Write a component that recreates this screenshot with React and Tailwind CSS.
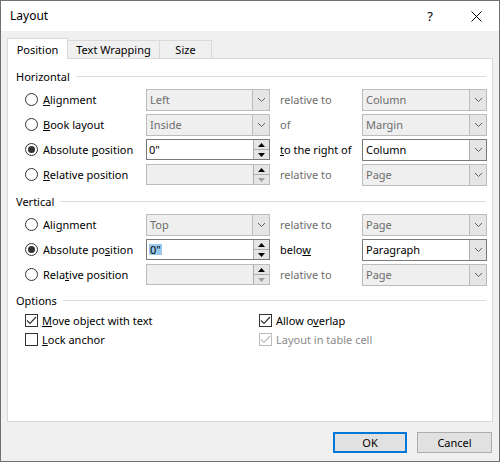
import React from "react";

const font = { fontFamily: '"Noto Sans", "Open Sans", sans-serif' };

function Chevron() {
  return (
    <svg width="9" height="6" viewBox="0 0 9 6">
      <path d="M1 1 L4.5 4.5 L8 1" fill="none" stroke="#606060" strokeWidth="1" />
    </svg>
  );
}

function Select({ value, disabled }) {
  return (
    <div
      className={
        "flex h-[22px] w-full items-stretch border " +
        (disabled ? "border-[#bcbcbc] bg-[#efefef] text-[#6d6d6d]" : "border-[#7a7a7a] bg-white text-black")
      }
    >
      <div className="flex flex-1 items-center pl-[3px]">{value}</div>
      <div
        className={
          "flex w-[17px] items-center justify-center border-l bg-[#e5e5e5] " +
          (disabled ? "border-[#bcbcbc]" : "border-[#adadad]")
        }
      >
        <Chevron />
      </div>
    </div>
  );
}

function Spinner({ value, disabled, selected }) {
  return (
    <div
      className={
        "flex h-[21px] w-full items-stretch border " +
        (disabled ? "border-[#bcbcbc] bg-[#efefef]" : "border-[#7a7a7a] bg-white")
      }
    >
      <div className="flex flex-1 items-center pl-[2px]">
        {value && (
          <span className={selected ? "bg-[#99c9ef] px-px text-black" : "text-black"}>{value}</span>
        )}
      </div>
      <div className="flex w-[16px] flex-col border-l border-[#adadad] bg-[#e5e5e5]">
        <div className="flex flex-1 items-center justify-center border-b border-[#adadad]">
          <svg width="7" height="4" viewBox="0 0 7 4">
            <path d="M0 4 L3.5 0 L7 4 Z" fill="#000" />
          </svg>
        </div>
        <div className="flex flex-1 items-center justify-center">
          <svg width="7" height="4" viewBox="0 0 7 4">
            <path d="M0 0 L3.5 4 L7 0 Z" fill={disabled ? "#a0a0a0" : "#000"} />
          </svg>
        </div>
      </div>
    </div>
  );
}

function Radio({ checked, children }) {
  return (
    <div className="flex items-center gap-[5px]">
      <div className="flex h-[13px] w-[13px] items-center justify-center rounded-full border border-[#333] bg-white">
        {checked && <div className="h-[7px] w-[7px] rounded-full bg-[#333]" />}
      </div>
      <span className="text-black">{children}</span>
    </div>
  );
}

function Check({ checked, disabled, children }) {
  return (
    <div className="flex items-center gap-[4px]">
      <div
        className={
          "flex h-[13px] w-[13px] items-center justify-center border bg-white " +
          (disabled ? "border-[#bcbcbc]" : "border-[#333]")
        }
      >
        {checked && (
          <svg width="11" height="9" viewBox="0 0 11 9">
            <path d="M1 4.5 L4 7.5 L10 1" fill="none" stroke={disabled ? "#bcbcbc" : "#333"} strokeWidth="1.2" />
          </svg>
        )}
      </div>
      <span className={disabled ? "text-[#8a8a8a]" : "text-black"}>{children}</span>
    </div>
  );
}

function Header({ children, className }) {
  return (
    <div className={"flex h-[21px] items-center pl-[8px] pr-[6px] " + className}>
      <span className="text-black">{children}</span>
      <div className="ml-[6px] h-px flex-1 bg-[#dcdcdc]" />
    </div>
  );
}

function Row({ left, control, mid, midDisabled, right }) {
  return (
    <div className="grid h-[25px] grid-cols-[121px_124px_10px_82px_125px] items-center pl-[17px]">
      <div>{left}</div>
      <div>{control}</div>
      <div />
      <div className={midDisabled ? "text-[#6d6d6d]" : "text-black"}>{mid}</div>
      <div>{right}</div>
    </div>
  );
}

export default function App() {
  return (
    <div
      className="flex h-[462px] w-[500px] flex-col border border-[#707070] bg-[#f0f0f0] text-[11px] leading-none"
      style={font}
    >
      <div className="flex h-[30px] shrink-0 items-center bg-white pl-[9px]">
        <span className="text-[12px] text-black">Layout</span>
        <span className="ml-auto mr-[38px] text-[13px] text-black">?</span>
        <svg className="mr-[17px]" width="11" height="11" viewBox="0 0 11 11">
          <path d="M0.5 0.5 L10.5 10.5 M10.5 0.5 L0.5 10.5" stroke="#000" strokeWidth="1" />
        </svg>
      </div>

      <div className="flex flex-1 flex-col px-[6px] pt-[7px]">
        <div className="relative z-10 flex items-end">
          <div className="-mb-px flex h-[21px] w-[61px] items-center justify-center border border-b-0 border-[#d9d9d9] bg-white">
            Position
          </div>
          <div className="flex h-[18px] w-[92px] items-center justify-center border border-b-0 border-l-0 border-[#d9d9d9] bg-[#f0f0f0]">
            Text Wrapping
          </div>
          <div className="flex h-[18px] w-[52px] items-center justify-center border border-b-0 border-l-0 border-[#d9d9d9] bg-[#f0f0f0]">
            Size
          </div>
        </div>

        <div className="flex h-[364px] flex-col border border-[#d9d9d9] bg-white pt-[7px]">
          <Header>Horizontal</Header>
          <Row
            left={<Radio><u>A</u>lignment</Radio>}
            control={<Select value="Left" disabled />}
            mid="relative to"
            midDisabled
            right={<Select value="Column" disabled />}
          />
          <Row
            left={<Radio><u>B</u>ook layout</Radio>}
            control={<Select value="Inside" disabled />}
            mid="of"
            midDisabled
            right={<Select value="Margin" disabled />}
          />
          <Row
            left={<Radio checked>Absolute <u>p</u>osition</Radio>}
            control={<Spinner value={'0"'} />}
            mid={<span><u>t</u>o the right of</span>}
            right={<Select value="Column" />}
          />
          <Row
            left={<Radio><u>R</u>elative position</Radio>}
            control={<Spinner disabled />}
            mid="relative to"
            midDisabled
            right={<Select value="Page" disabled />}
          />

          <Header className="mt-[4px]">Vertical</Header>
          <Row
            left={<Radio>Ali<u>g</u>nment</Radio>}
            control={<Select value="Top" disabled />}
            mid="relative to"
            midDisabled
            right={<Select value="Page" disabled />}
          />
          <Row
            left={<Radio checked>Absolute po<u>s</u>ition</Radio>}
            control={<Spinner value={'0"'} selected />}
            mid={<span>belo<u>w</u></span>}
            right={<Select value="Paragraph" />}
          />
          <Row
            left={<Radio>Rela<u>t</u>ive position</Radio>}
            control={<Spinner disabled />}
            mid="relative to"
            midDisabled
            right={<Select value="Page" disabled />}
          />

          <Header className="mt-[3px]">Options</Header>
          <div className="grid grid-cols-[234px_1fr] pl-[17px]">
            <div className="flex h-[19px] items-center">
              <Check checked><u>M</u>ove object with text</Check>
            </div>
            <div className="flex h-[19px] items-center">
              <Check checked>Allow o<u>v</u>erlap</Check>
            </div>
            <div className="flex h-[19px] items-center">
              <Check><u>L</u>ock anchor</Check>
            </div>
            <div className="flex h-[19px] items-center">
              <Check checked disabled>Layout in table cell</Check>
            </div>
          </div>
        </div>

        <div className="mt-[10px] flex justify-end gap-[10px] pr-[1px]">
          <button className="flex h-[21px] w-[74px] items-center justify-center border-2 border-[#0078d7] bg-[#e1e1e1] text-black">
            OK
          </button>
          <button className="flex h-[21px] w-[75px] items-center justify-center border border-[#adadad] bg-[#e1e1e1] text-black">
            Cancel
          </button>
        </div>
      </div>
    </div>
  );
}
